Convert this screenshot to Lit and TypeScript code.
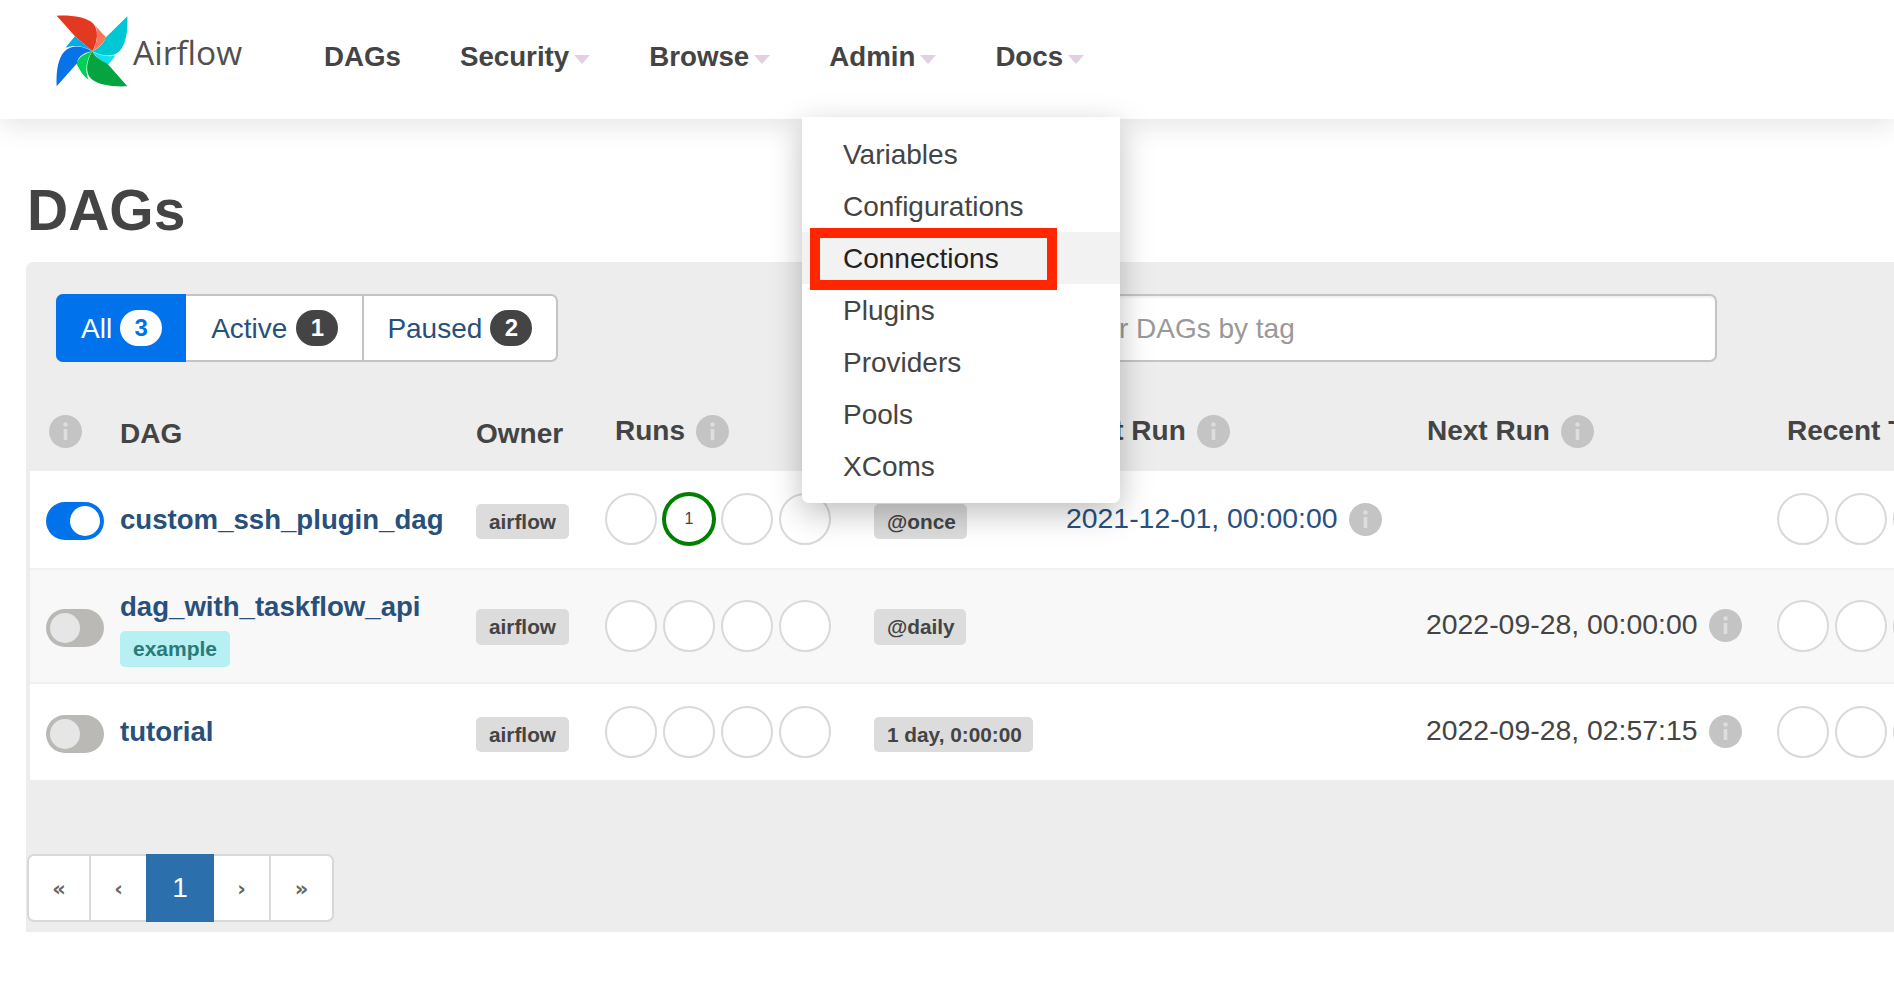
import { LitElement, html, css, svg } from "lit";
import { customElement } from "lit/decorators.js";

const info = (cls = "") => html`<svg class="info ${cls}" viewBox="0 0 33 33" aria-hidden="true">
  <circle cx="16.5" cy="16.5" r="16.5" fill="#c4c4c4"></circle>
  <circle cx="16.5" cy="9.5" r="2.2" fill="#dedede"></circle>
  <rect x="14.7" y="14" width="3.6" height="11" fill="#dedede"></rect>
</svg>`;

const logo = svg`
  <path fill="#e43921" d="M50 48C95 46 140 52 160 72C176 90 174 125 157 155L105 110Z"></path>
  <path fill="#ff7557" d="M166 78L198 113C192 130 175 145 157 155C172 130 176 100 166 78Z"></path>
  <path fill="#00c7d4" d="M262 50C264 95 258 135 238 155C222 172 190 172 157 155C178 145 192 130 198 113Z"></path>
  <path fill="#11e1ee" d="M157 155C180 168 205 172 226 168L205 195C188 190 170 175 157 155Z"></path>
  <path fill="#04a541" d="M262 260C215 262 172 256 152 236C136 220 138 185 157 155C165 175 190 185 205 195Z"></path>
  <path fill="#00d05a" d="M157 155C138 180 134 215 146 240C130 230 118 210 110 192C115 172 135 162 157 155Z"></path>
  <path fill="#0872e8" d="M50 260C48 215 54 175 74 155C92 136 125 136 157 155C135 158 112 170 112 190Z"></path>
  <path fill="#00ade6" d="M105 110L157 155C135 140 105 134 76 144Z"></path>
`;

interface Dag {
  name: string; on: boolean; tag?: string; schedule: string;
  last?: string; next?: string; active?: boolean;
}

const DAGS: Dag[] = [
  { name: "custom_ssh_plugin_dag", on: true, schedule: "@once", last: "2021-12-01, 00:00:00", active: true },
  { name: "dag_with_taskflow_api", on: false, tag: "example", schedule: "@daily", next: "2022-09-28, 00:00:00" },
  { name: "tutorial", on: false, schedule: "1 day, 0:00:00", next: "2022-09-28, 02:57:15" },
];

const MENU = ["Variables", "Configurations", "Connections", "Plugins", "Providers", "Pools", "XComs"];

@customElement("app-root")
export class AppRoot extends LitElement {
  static styles = css`
    :host {
      display: block;
      width: 1894px;
      min-height: 988px;
      overflow: hidden;
      background: #fff;
      color: #444;
      font-family: "Liberation Sans", Arial, sans-serif;
      font-size: 28px;
    }
    * { box-sizing: border-box; }
    .nav {
      position: relative;
      z-index: 2;
      height: 119px;
      display: flex;
      align-items: flex-start;
      padding-left: 56px;
      background: #fff;
      box-shadow: 0 6px 26px rgba(0, 0, 0, 0.11);
    }
    .logo { width: 72px; height: 72px; margin-top: 15px; flex: none; }
    .brand {
      font-family: "Open Sans", sans-serif;
      font-size: 33.5px;
      line-height: 44px;
      color: #51504f;
      margin: 30px 0 0 5px;
      width: 110px;
    }
    .links { display: flex; gap: 59px; margin: 41px 0 0 81px; }
    .link {
      display: flex;
      align-items: center;
      gap: 5px;
      font-size: 27.7px;
      font-weight: 700;
      line-height: 32px;
    }
    .caret {
      width: 0;
      height: 0;
      margin-top: 5px;
      border-left: 8px solid transparent;
      border-right: 8px solid transparent;
      border-top: 9px solid #e3cfe3;
    }
    .menu {
      position: absolute;
      left: 802px;
      top: 117px;
      width: 318px;
      margin: 0;
      padding: 11px 0;
      list-style: none;
      background: #fff;
      border-radius: 0 0 7px 7px;
      box-shadow: 0 10px 32px rgba(0, 0, 0, 0.26);
      z-index: 3;
    }
    .menu li {
      position: relative;
      height: 52px;
      line-height: 54px;
      padding-left: 41px;
      color: #444;
    }
    .menu li.hover { background: #f2f2f2; color: #222; }
    .mark {
      position: absolute;
      left: 8px;
      top: -4px;
      width: 247px;
      height: 62px;
      border: 10px solid #ff2600;
    }
    h1 {
      margin: 0;
      padding: 62px 0 23px 27px;
      font-size: 57px;
      line-height: 58px;
      font-weight: 700;
    }
    .panel {
      margin-left: 26px;
      padding: 32px 0 10px;
      background: #ededed;
      border-top-left-radius: 7px;
    }
    .filters { display: flex; justify-content: space-between; padding: 0 177px 0 30px; }
    .group {
      display: flex;
      height: 68px;
      background: #fff;
      border: 2px solid #c4c4c4;
      border-radius: 7px;
    }
    .seg {
      display: flex;
      align-items: center;
      gap: 8px;
      padding: 2px 24px 0;
      color: #294f7b;
      border-right: 2px solid #c4c4c4;
    }
    .seg.wide { gap: 9px; padding-left: 25px; }
    .seg:last-child { border-right: 0; padding-left: 23px; }
    .seg.sel {
      margin: -2px 0 -2px -2px;
      padding: 2px 24px 0 25px;
      background: #0073ec;
      color: #fff;
      border: 0;
      border-radius: 7px 0 0 7px;
    }
    .count {
      min-width: 42px;
      height: 36px;
      display: grid;
      place-items: center;
      margin-top: -2px;
      border-radius: 18px;
      background: #444;
      color: #fff;
      font-size: 24px;
      font-weight: 700;
    }
    .sel .count { background: #fff; color: #0073ec; }
    .search {
      width: 668px;
      height: 68px;
      padding: 2px 15px 0;
      font: inherit;
      color: #444;
      background: #fff;
      border: 2px solid #c4c4c4;
      border-radius: 7px;
      box-shadow: inset 0 2px 2px rgba(0, 0, 0, 0.06);
      outline: none;
    }
    .search::placeholder { color: #999; opacity: 1; }
    .table { margin-left: 4px; }
    .head, .row {
      display: grid;
      grid-template-columns: 90px 356px 129px 269px 192px 361px 350px minmax(0, 1fr);
      align-items: center;
    }
    .head {
      height: 109px;
      padding: 50px 0 26px;
      font-size: 28px;
      font-weight: 700;
      white-space: nowrap;
    }
    .th { display: flex; align-items: center; gap: 11px; }
    .th.low { padding-top: 6px; }
    .th.pad { padding-left: 10px; }
    .th.first { padding-left: 19px; }
    .info { width: 33px; height: 33px; flex: none; display: block; }
    .row { height: 99px; background: #fff; border-bottom: 2px solid #f0f0f0; }
    .row.tall { height: 114px; background: #f8f8f8; }
    .row:last-child { height: 96px; border-bottom: 0; }
    .toggle {
      width: 58px;
      height: 38px;
      margin: 3px 0 0 16px;
      padding: 4px;
      display: flex;
      border-radius: 19px;
      background: #bbb9b6;
    }
    .toggle.on { background: #0073ec; justify-content: flex-end; }
    .knob { width: 30px; height: 30px; border-radius: 50%; background: #e6e6e6; }
    .on .knob { background: #fff; }
    .name { font-size: 27.6px; font-weight: 700; color: #294f7b; line-height: 34px; display: block; }
    .tag {
      display: inline-block;
      margin-top: 7px;
      padding: 0 13px;
      height: 36px;
      line-height: 35px;
      border-radius: 5px;
      background: #b6f0f2;
      color: #2a7a78;
      font-size: 21px;
      font-weight: 700;
    }
    .stack { margin-top: 4px; }
    .pill {
      justify-self: start;
      margin-top: 4px;
      padding: 0 13px;
      height: 35px;
      line-height: 35px;
      border-radius: 5px;
      background: #dcdcdc;
      font-size: 20.8px;
      font-weight: 700;
      white-space: nowrap;
    }
    .pill.sched { padding-right: 11px; }
    .tall .pill { margin-top: 2px; height: 36px; }
    .dots { display: flex; gap: 6px; overflow: hidden; padding: 1px; margin-left: -1px; }
    .row:not(.tall) .dots { margin-top: -1px; }
    .dot {
      flex: none;
      width: 52px;
      height: 52px;
      display: grid;
      place-items: center;
      border: 2px solid #d9d9d9;
      border-radius: 50%;
      background: #fff;
      font-size: 16px;
    }
    .dot.done { width: 54px; height: 54px; margin: -1px; border: 4px solid #008000; }
    .time {
      display: flex;
      align-items: center;
      gap: 11px;
      white-space: nowrap;
      font-size: 28.4px;
      margin: -2px 0 0 -1px;
    }
    .time span { padding-bottom: 2px; }
    .time.blue { color: #285080; margin: 0; }
    .pager {
      display: flex;
      width: 307px;
      height: 68px;
      margin: 74px 0 0 1px;
      background: #fff;
      border: 2px solid #d8d8d8;
      border-radius: 7px;
    }
    .page {
      display: grid;
      place-items: center;
      padding-top: 2px;
      color: #666;
      font-family: "DejaVu Sans", sans-serif;
      font-size: 21px;
      font-weight: 700;
    }
    .page.w1 { width: 62px; border-right: 2px solid #d8d8d8; }
    .page.w2 { width: 55px; }
    .page.w3 { width: 57px; border-right: 2px solid #d8d8d8; }
    .page.w4 { width: 61px; }
    .page.cur {
      width: 68px;
      margin: -2px 0;
      padding-top: 0;
      background: #2b6fad;
      color: #fff;
      font-family: "Liberation Sans", sans-serif;
      font-size: 28px;
      font-weight: 400;
    }
  `;

  private dots(n: number, active = false) {
    return html`<div class="dots">
      ${Array.from({ length: n }, (_, i) =>
        active && i === 1 ? html`<span class="dot done">1</span>` : html`<span class="dot"></span>`
      )}
    </div>`;
  }

  render() {
    return html`
      <nav class="nav">
        <svg class="logo" viewBox="48 46 216 216" aria-label="Airflow logo">${logo}</svg>
        <div class="brand">Airflow</div>
        <div class="links">
          <span class="link">DAGs</span>
          ${["Security", "Browse", "Admin", "Docs"].map(
            (l) => html`<span class="link">${l}<i class="caret"></i></span>`
          )}
        </div>
        <ul class="menu">
          ${MENU.map((m) =>
            m === "Connections"
              ? html`<li class="hover">${m}<span class="mark"></span></li>`
              : html`<li>${m}</li>`
          )}
        </ul>
      </nav>
      <h1>DAGs</h1>
      <section class="panel">
        <div class="filters">
          <div class="group">
            <span class="seg sel">All <b class="count">3</b></span>
            <span class="seg wide">Active <b class="count">1</b></span>
            <span class="seg">Paused <b class="count">2</b></span>
          </div>
          <input class="search" placeholder="Filter DAGs by tag" />
        </div>
        <div class="table">
          <div class="head">
            <div class="th first">${info()}</div>
            <div class="th low">DAG</div>
            <div class="th low">Owner</div>
            <div class="th pad">Runs ${info()}</div>
            <div class="th">Schedule</div>
            <div class="th">Last Run ${info()}</div>
            <div class="th">Next Run ${info()}</div>
            <div class="th pad">Recent Tasks</div>
          </div>
          ${DAGS.map(
            (d) => html`
              <div class="row ${d.tag ? "tall" : ""}">
                <div class="toggle ${d.on ? "on" : ""}"><span class="knob"></span></div>
                <div class="${d.tag ? "stack" : ""}">
                  <span class="name">${d.name}</span>
                  ${d.tag ? html`<span class="tag">${d.tag}</span>` : ""}
                </div>
                <span class="pill">airflow</span>
                ${this.dots(4, d.active)}
                <span class="pill sched">${d.schedule}</span>
                <div class="time blue">${d.last ? html`<span>${d.last}</span> ${info()}` : ""}</div>
                <div class="time">${d.next ? html`<span>${d.next}</span> ${info()}` : ""}</div>
                ${this.dots(8)}
              </div>
            `
          )}
        </div>
        <div class="pager">
          <span class="page w1">«</span>
          <span class="page w2">‹</span>
          <span class="page cur">1</span>
          <span class="page w3">›</span>
          <span class="page w4">»</span>
        </div>
      </section>
    `;
  }
}
